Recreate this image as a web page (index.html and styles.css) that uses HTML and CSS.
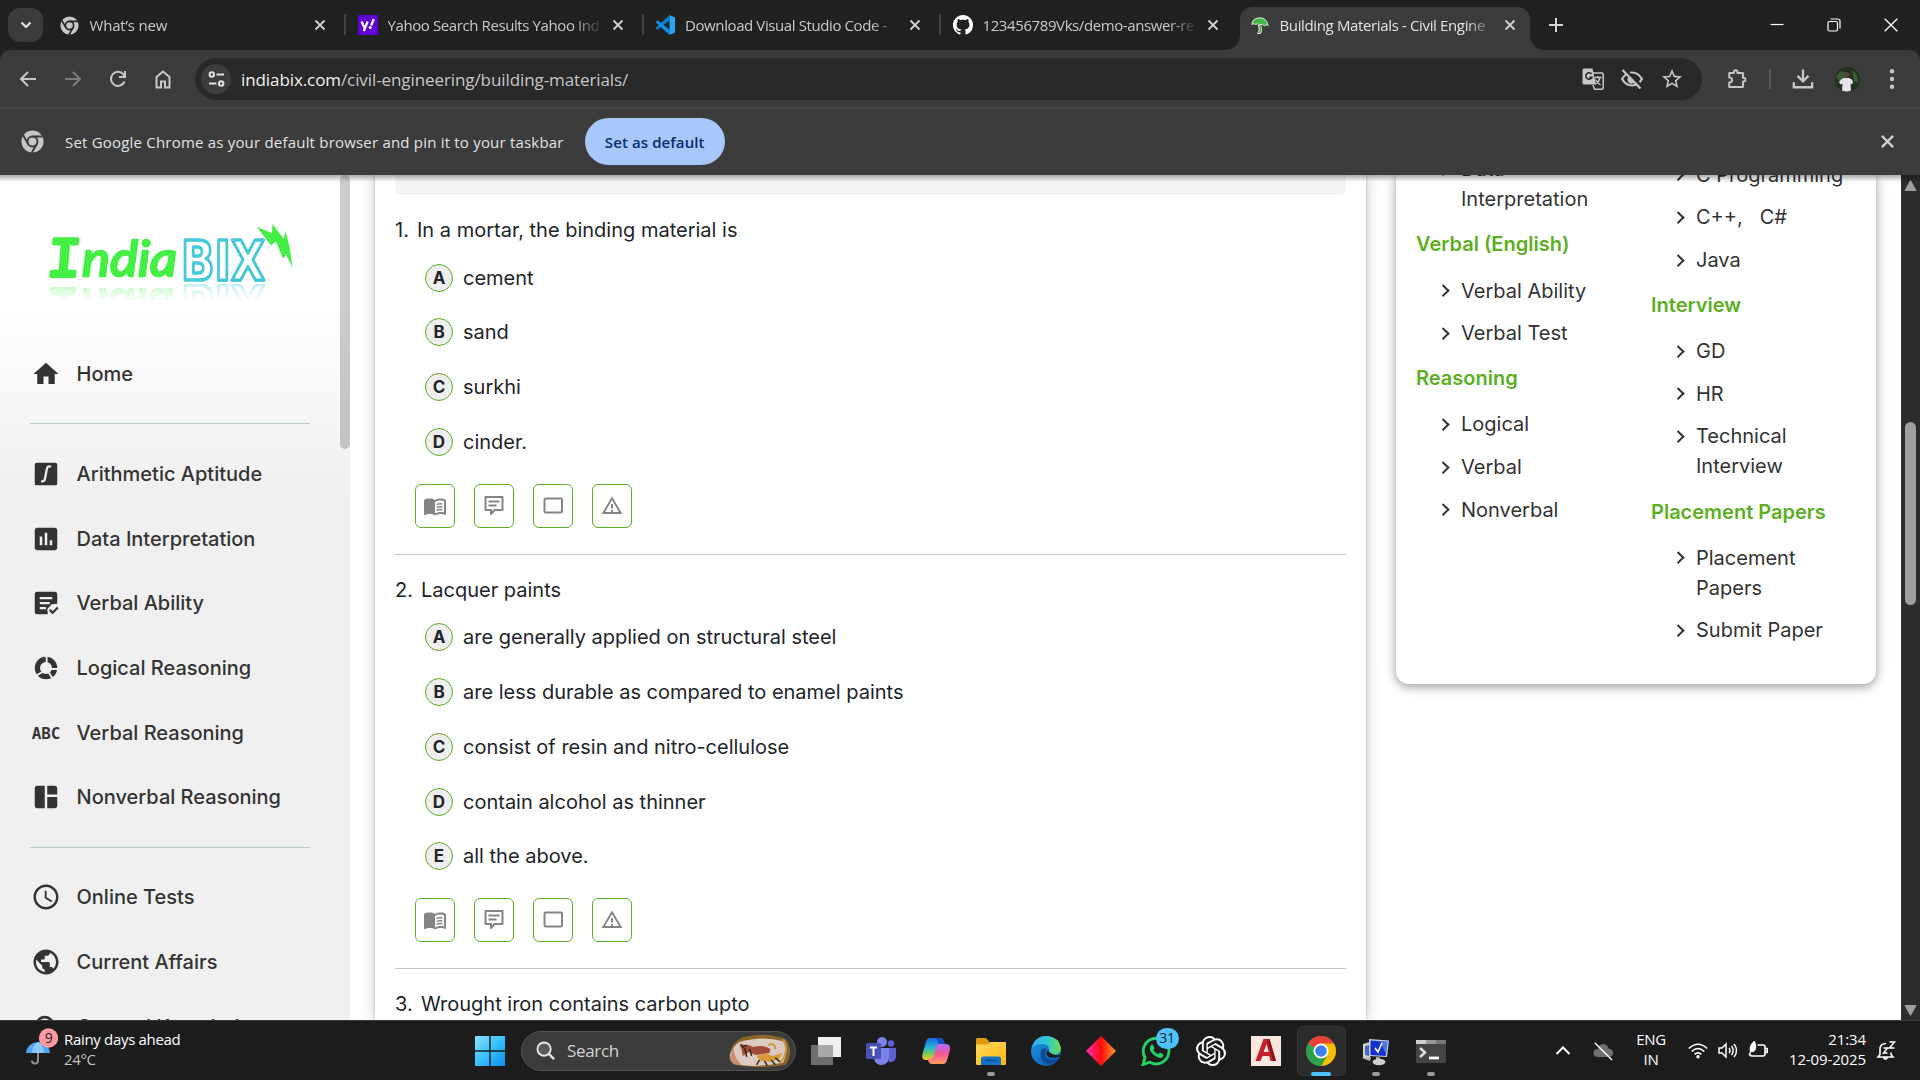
FILE: index.html
```
<!DOCTYPE html>
<html lang="en">
<head>
<meta charset="utf-8">
<title>Building Materials - Civil Engineering</title>
<link rel="stylesheet" href="styles.css">
</head>
<body>
<svg class="defs" width="0" height="0">
  <defs>
    <symbol id="x" viewBox="0 0 12 12"><path d="M1.500 1.500l9 9m0-9l-9 9" fill="none" stroke="currentColor" stroke-width="1.800"/></symbol>
    <symbol id="chrome-mono" viewBox="0 0 24 24"><circle cx="12" cy="12" r="11.500" fill="currentColor"/><circle cx="12" cy="12" r="5.200" fill="none" stroke="var(--bg)" stroke-width="2"/><path d="M12 6.800h10.600M7.500 14.600L2.200 5.400M16.500 14.600L11.200 23.800" stroke="var(--bg)" stroke-width="2"/></symbol>
    <symbol id="book" viewBox="0 0 24 24"><path d="M21 5c-1.100-.35-2.300-.5-3.500-.5-1.950 0-4.050.4-5.500 1.500-1.450-1.100-3.550-1.500-5.500-1.500S2.450 4.900 1 6v14.650c0 .25.25.5.5.5 1.500-.7 3.500-1.150 5-1.150 1.950 0 4.050.4 5.500 1.500 1.350-.85 3.800-1.500 5.500-1.500 1.650 0 3.350.3 4.750 1.050.45.15.75-.15.75-.45V6c-.6-.45-1.250-.75-2-1zm0 13.500c-3.200-.9-6.500-.4-9 1V8c2.700-1.700 6.300-1.900 9-1z" fill="currentColor"/><path d="M13.600 10.600c1.800-.8 3.900-.9 5.900-.5M13.600 13.400c1.800-.8 3.900-.9 5.900-.5M13.600 16.200c1.800-.8 3.900-.9 5.900-.5" fill="none" stroke="currentColor" stroke-width="1.500"/></symbol>
    <symbol id="note" viewBox="0 0 24 24"><path d="M3.500 3h17v13h-8l-3.500 4v-4H3.500z" fill="none" stroke="currentColor" stroke-width="2" stroke-linejoin="round"/><path d="M6.500 7.500h11M6.500 11.500h8" stroke="currentColor" stroke-width="1.900"/></symbol>
    <symbol id="box" viewBox="0 0 24 24"><rect x="3.500" y="4.500" width="17.500" height="14" rx="1.200" fill="none" stroke="currentColor" stroke-width="2"/></symbol>
    <symbol id="warn" viewBox="0 0 24 24"><path d="M12 4.300L3.300 19h17.400z" fill="none" stroke="currentColor" stroke-width="1.900"/><path d="M12 10v4.500M12 16v2" stroke="currentColor" stroke-width="2"/></symbol>
    <linearGradient id="win" x1="0" y1="0" x2="1" y2="1"><stop offset="0" stop-color="#8be0ff"/><stop offset=".5" stop-color="#37c2fb"/><stop offset="1" stop-color="#0a8cf0"/></linearGradient>
    <linearGradient id="fold" x1="0" y1="0" x2="1" y2="1"><stop offset="0" stop-color="#ffd95c"/><stop offset="1" stop-color="#fbb813"/></linearGradient>
    <linearGradient id="edgeA" x1="0" y1="0" x2="1" y2="0"><stop offset="0" stop-color="#36b6f0"/><stop offset=".5" stop-color="#2fc5d8"/><stop offset="1" stop-color="#6be04a"/></linearGradient>
    <linearGradient id="edgeB" x1="0" y1="0" x2="1" y2="1"><stop offset="0" stop-color="#1e9be8"/><stop offset="1" stop-color="#0b4fa8"/></linearGradient>
    <linearGradient id="dia"><stop offset="0" stop-color="#ff2ec0"/><stop offset=".5" stop-color="#ff0a0a"/><stop offset="1" stop-color="#ff9d2b"/></linearGradient>
    <linearGradient id="copA" x1="0" y1="0" x2="0" y2="1"><stop offset="0" stop-color="#1768e8"/><stop offset=".45" stop-color="#27b6d6"/><stop offset=".7" stop-color="#6ccf57"/><stop offset="1" stop-color="#ffc72e"/></linearGradient>
    <linearGradient id="copB" x1="0" y1="0" x2="0" y2="1"><stop offset="0" stop-color="#b26bff"/><stop offset=".5" stop-color="#f2599a"/><stop offset="1" stop-color="#ff9a5c"/></linearGradient>
    <linearGradient id="fade" x1="0" y1="0" x2="0" y2="1"><stop offset="0" stop-color="#fff" stop-opacity=".32"/><stop offset="1" stop-color="#fff" stop-opacity="0"/></linearGradient>
    <mask id="reflect" maskUnits="userSpaceOnUse" x="0" y="69" width="260" height="17"><rect x="0" y="69" width="260" height="17" fill="url(#fade)"/></mask>
  </defs>
</svg>

<div class="window">
  <div class="tabstrip">
    <div class="tab-search"><svg width="12" height="8" viewBox="0 0 12 8"><path d="M1.500 1.500L6 6l4.500-4.500" fill="none" stroke="#e3e3e3" stroke-width="2.200"/></svg></div>
    <div class="tab"><svg class="fav mono"><use href="#chrome-mono"/></svg><span class="tab-title">What’s new</span><svg class="close"><use href="#x"/></svg></div>
    <div class="tab"><svg class="fav" viewBox="0 0 20 20"><rect width="20" height="20" fill="#6001d2"/><path d="M3.500 6.500l3 6.300M9.700 6.500L5.700 16M15.800 4l-2.600 6.500" stroke="#fff" stroke-width="2.300"/><circle cx="12.200" cy="12.600" r="1.500" fill="#fff"/></svg><span class="tab-title">Yahoo Search Results Yahoo Ind</span><svg class="close"><use href="#x"/></svg></div>
    <div class="tab"><svg class="fav" viewBox="0 0 20 20"><path d="M14.500 0L20 2.500v15L14.500 20z" fill="#2aa5f3"/><path d="M14.500 0v5.500L2.500 14.800.5 13z" fill="#0a7dcb"/><path d="M14.500 20v-5.500L2.500 5.200.5 7z" fill="#0f8fe0"/></svg><span class="tab-title">Download Visual Studio Code -</span><svg class="close"><use href="#x"/></svg></div>
    <div class="tab"><svg class="fav" viewBox="0 0 16 16"><path fill="#fff" d="M8 0C3.580 0 0 3.580 0 8c0 3.540 2.290 6.530 5.470 7.590.4.070.55-.17.55-.38 0-.19-.01-.82-.01-1.490-2.010.37-2.530-.49-2.690-.94-.09-.23-.48-.94-.82-1.130-.28-.15-.68-.52-.01-.53.63-.01 1.080.58 1.230.82.72 1.210 1.870.87 2.330.66.07-.52.28-.87.51-1.070-1.780-.2-3.640-.89-3.640-3.950 0-.87.31-1.590.82-2.150-.08-.2-.36-1.020.08-2.120 0 0 .67-.21 2.200.82.64-.18 1.320-.27 2-.27s1.360.09 2 .27c1.530-1.040 2.200-.82 2.200-.82.44 1.100.16 1.920.08 2.120.51.56.82 1.270.82 2.150 0 3.070-1.870 3.750-3.650 3.950.29.25.54.73.54 1.480 0 1.070-.01 1.930-.01 2.200 0 .21.15.46.55.38A8.010 8.010 0 0 0 16 8c0-4.420-3.580-8-8-8z"/></svg><span class="tab-title">123456789Vks/demo-answer-re</span><svg class="close"><use href="#x"/></svg></div>
    <div class="tab active"><svg class="fav" viewBox="0 0 20 20"><path d="M9 9l1 6q0 3-3 2" fill="none" stroke="#e8e8e8" stroke-width="3.500"/><path d="M1 9Q1 3 8 2q8-1 10 8-2-2-4 .5-2-3-4.500-1Q7 7 5 9 3 7 1 9z" fill="#45b84a" stroke="#e3f5e0" stroke-width="1"/><path d="M9.500 9.500l.7 6q-.5 2-2.700 1.500" fill="none" stroke="#3ba843" stroke-width="1.500"/></svg><span class="tab-title">Building Materials - Civil Engine</span><svg class="close"><use href="#x"/></svg></div>
    <svg class="new-tab" viewBox="0 0 14 14"><path d="M7 0v14M0 7h14" stroke="#d6d6d6" stroke-width="2"/></svg>
    <div class="win-buttons">
      <svg viewBox="0 0 14 14"><path d="M.5 6.500h13" stroke="#fff" stroke-width="1.200"/></svg>
      <svg viewBox="0 0 14 14"><rect x="1" y="3.500" width="9.500" height="9.500" rx="1.500" fill="none" stroke="#fff" stroke-width="1.200"/><path d="M3.500 1h7.500q2 0 2 2v7.500" fill="none" stroke="#fff" stroke-width="1.200"/></svg>
      <svg viewBox="0 0 14 14"><path d="M.7.7l12.600 12.600M13.300.7L.7 13.300" stroke="#fff" stroke-width="1.300"/></svg>
    </div>
  </div>

  <div class="toolbar">
    <svg class="nav" viewBox="0 0 20 20"><path d="M18 10H3M10 3l-7 7 7 7" fill="none" stroke="#c7c7c7" stroke-width="2"/></svg>
    <svg class="nav" viewBox="0 0 20 20"><path d="M2 10h15M10 3l7 7-7 7" fill="none" stroke="#7d7d7d" stroke-width="2"/></svg>
    <svg class="nav" viewBox="0 0 20 20"><path d="M16.500 12.500A7 7 0 1 1 15.500 5.500L17 7.500" fill="none" stroke="#c7c7c7" stroke-width="2"/><path d="M17 2v6h-6" fill="none" stroke="#c7c7c7" stroke-width="2"/></svg>
    <svg class="nav" viewBox="0 0 20 20"><path d="M3.500 8L10 2.500 16.500 8v10.500h-4.500v-6H8v6H3.500z" fill="none" stroke="#c7c7c7" stroke-width="2"/></svg>
    <div class="omnibox">
      <div class="site-info"><svg width="17" height="16" viewBox="0 0 17 16"><g fill="none" stroke="#e3e3e3" stroke-width="2"><circle cx="3.800" cy="3.500" r="2.200"/><path d="M8.500 3.500H16M1 12.500h7.500"/><circle cx="13.200" cy="12.500" r="2.200"/></g></svg></div>
      <span class="url"><b>indiabix.com</b>/civil-engineering/building-materials/</span>
      <div class="omni-actions">
        <svg viewBox="0 0 22 22"><path d="M2 .5h8.500l3.500 16H2q-1.500 0-1.500-1.500V2Q.5.500 2 .5z" fill="#c7c7c7"/><path d="M11 5h9q1.200 0 1.200 1.200V20q0 1.200-1.200 1.200h-7.500L11 17" fill="none" stroke="#c7c7c7" stroke-width="1.500"/><path d="M12.500 9.500h7M15.800 8v1.500M18 9.500q-1 4.500-4.500 6.500M13.500 11.500q2 3.500 5 5.500" fill="none" stroke="#c7c7c7" stroke-width="1.400"/><path d="M9.700 6.200A3.200 3.200 0 1 0 10 9.200H7.300" fill="none" stroke="#282828" stroke-width="1.500"/></svg>
        <svg viewBox="0 0 24 24"><path d="M2 12q4-6.500 10-6.500T22 12q-4 6.500-10 6.500T2 12z" fill="none" stroke="#c7c7c7" stroke-width="2.200"/><path d="M9 9.500a4 4 0 1 0 6 5z" fill="#c7c7c7"/><path d="M4 1.500L22 19.500" stroke="#282828" stroke-width="2.500"/><path d="M2.500 3L20.500 21.500" stroke="#c7c7c7" stroke-width="2.200"/></svg>
        <svg viewBox="0 0 24 24"><path fill="#c7c7c7" d="M22 9.240l-7.190-.62L12 2 9.190 8.630 2 9.240l5.460 4.730L5.820 21 12 17.270 18.180 21l-1.630-7.030L22 9.240zM12 15.400l-3.760 2.270 1-4.280-3.320-2.880 4.380-.38L12 6.100l1.710 4.040 4.380.38-3.320 2.880 1 4.280L12 15.400z"/></svg>
      </div>
    </div>
    <div class="toolbar-right">
      <svg class="ext" viewBox="0 0 24 24"><path d="M3.500 5.500h5.200q-.8-3 1.800-3t1.800 3h6.200v5.200q2.700-.6 2.700 2t-2.700 2v6h-15v-5q3.200-.2 3.200-2.700T3.500 10.300z" fill="none" stroke="#c7c7c7" stroke-width="2.100" stroke-linejoin="round"/></svg>
      <i class="tb-sep"></i>
      <svg class="ext" viewBox="0 0 24 24"><path d="M12 1.500v12M6 8.500l6 6 6-6M2 15.500v5.500h20v-5.500" fill="none" stroke="#c7c7c7" stroke-width="2.600"/></svg>
      <svg class="avatar" viewBox="0 0 25 25"><circle cx="12.500" cy="12.500" r="12.500" fill="#24301f"/><path d="M1 10q5-9 9-4t-5 9zM17 3q7 4 6 13l-4-2z" fill="#3c5a32"/><circle cx="11.500" cy="8" r="2.700" fill="#5d4436"/><path d="M4 15q1.500-3 5-4h5q3.500 1 4 4l-1 2.500-1.500-1 .5 7q-4 2-9 0l.5-7-2 1z" fill="#e6e6ea"/></svg>
      <svg class="ext" viewBox="0 0 24 24"><g fill="#c7c7c7"><circle cx="12" cy="3.500" r="2.400"/><circle cx="12" cy="12" r="2.400"/><circle cx="12" cy="20.500" r="2.400"/></g></svg>
    </div>
  </div>

  <div class="infobar">
    <svg class="info-icon"><use href="#chrome-mono"/></svg>
    <span class="info-text">Set Google Chrome as your default browser and pin it to your taskbar</span>
    <button class="default-btn">Set as default</button>
    <svg class="close info-close"><use href="#x"/></svg>
  </div>

  <div class="viewport">
    <aside class="sidebar">
      <svg class="logo" width="260" height="90" viewBox="0 0 260 90">
        <g id="wordmark">
          <text class="logo-i" transform="skewX(-5)" x="11" y="61" textLength="34" lengthAdjust="spacingAndGlyphs">I</text>
          <text class="logo-india" x="42" y="61" textLength="95" lengthAdjust="spacingAndGlyphs">ndia</text>
          <text class="logo-bix" x="141" y="65" textLength="84" lengthAdjust="spacingAndGlyphs">BIX</text>
        </g>
        <path d="M217 12l15 6 .5-9 11 14.500 2-7 4 15 3 21-6.500-13-3 4-7-17-5 4z" fill="#45ef45"/>
        <g mask="url(#reflect)"><use href="#wordmark" transform="translate(0 135) scale(1 -1)"/></g>
      </svg>
      <nav class="side-nav">
        <a class="home"><svg viewBox="0 0 24 24"><path d="M10 20v-6h4v6h5v-8h3L12 3 2 12h3v8z"/></svg>Home</a>
        <hr>
        <a><svg viewBox="0 0 24 24"><rect x="3" y="3" width="18" height="18" rx="1.500"/><path d="M16 6.200q-2.700-1.200-3.300 1.800l-1.600 8q-.5 2.500-3 1.700" fill="none" stroke="#f0f0f0" stroke-width="1.800"/></svg>Arithmetic Aptitude</a>
        <a><svg viewBox="0 0 24 24"><path d="M19 3H5c-1.100 0-2 .9-2 2v14c0 1.100.9 2 2 2h14c1.100 0 2-.9 2-2V5c0-1.100-.9-2-2-2zM9 17H7v-7h2v7zm4 0h-2V7h2v10zm4 0h-2v-4h2v4z"/></svg>Data Interpretation</a>
        <a><svg viewBox="0 0 24 24"><path d="M5 3h14q2 0 2 2v7.500l-4.500.5-3.500 4 .5 4H5q-2 0-2-2V5q0-2 2-2z"/><path d="M7 8h10M7 12h8M7 16h5" stroke="#f0f0f0" stroke-width="1.800"/><path d="M15 17.500l2.300 2.300 4.200-4.200" fill="none" stroke="#333" stroke-width="1.800"/></svg>Verbal Ability</a>
        <a><svg viewBox="0 0 24 24"><circle cx="12" cy="12" r="6.900" fill="none" stroke="#333" stroke-width="4.200"/><path d="M12.500 8V1M16 12.800h7M14 15l3.500 6M9.500 15L3.500 18.500" stroke="#f0f0f0" stroke-width="1.500"/></svg>Logical Reasoning</a>
        <a><svg viewBox="0 0 24 24"><text class="abc" x="0.500" y="16.500" textLength="23" lengthAdjust="spacingAndGlyphs">ABC</text></svg>Verbal Reasoning</a>
        <a><svg viewBox="0 0 24 24"><path d="M11 21H5c-1.100 0-2-.9-2-2V5c0-1.100.9-2 2-2h6v18zm2 0h6c1.100 0 2-.9 2-2v-7h-8v9zm8-11V5c0-1.100-.9-2-2-2h-6v7h8z"/></svg>Nonverbal Reasoning</a>
        <hr class="second">
        <a><svg viewBox="0 0 24 24"><path d="M11.990 2C6.470 2 2 6.480 2 12s4.470 10 9.990 10C17.520 22 22 17.520 22 12S17.520 2 11.990 2zM12 20c-4.420 0-8-3.580-8-8s3.580-8 8-8 8 3.580 8 8-3.580 8-8 8zm.5-13H11v6l5.250 3.150.75-1.230-4.500-2.670z"/></svg>Online Tests</a>
        <a><svg viewBox="0 0 24 24"><path d="M12 2C6.480 2 2 6.480 2 12s4.480 10 10 10 10-4.480 10-10S17.520 2 12 2zm-1 17.930c-3.950-.49-7-3.850-7-7.930 0-.62.08-1.210.21-1.790L9 15v1c0 1.100.9 2 2 2v1.930zm6.900-2.540c-.26-.81-1-1.390-1.900-1.390h-1v-3c0-.55-.45-1-1-1H8v-2h2c.55 0 1-.45 1-1V7h2c1.100 0 2-.9 2-2v-.41c2.930 1.190 5 4.060 5 7.410 0 2.080-.8 3.970-2.100 5.390z"/></svg>Current Affairs</a>
        <a><svg viewBox="0 0 24 24"><circle cx="11" cy="10.500" r="6.500" fill="none" stroke="#333" stroke-width="2.200"/></svg>General Knowledge</a>
      </nav>
      <i class="side-thumb"></i>
    </aside>

    <main class="quiz">
      <div class="prev-box"></div>
      <section class="question">
        <h3><span>1.</span>In a mortar, the binding material is</h3>
        <div class="opt"><b>A</b>cement</div>
        <div class="opt"><b>B</b>sand</div>
        <div class="opt"><b>C</b>surkhi</div>
        <div class="opt"><b>D</b>cinder.</div>
        <div class="actions"><a><svg><use href="#book"/></svg></a><a><svg><use href="#note"/></svg></a><a><svg><use href="#box"/></svg></a><a><svg><use href="#warn"/></svg></a></div>
      </section>
      <section class="question">
        <h3><span>2.</span>Lacquer paints</h3>
        <div class="opt"><b>A</b>are generally applied on structural steel</div>
        <div class="opt"><b>B</b>are less durable as compared to enamel paints</div>
        <div class="opt"><b>C</b>consist of resin and nitro-cellulose</div>
        <div class="opt"><b>D</b>contain alcohol as thinner</div>
        <div class="opt"><b>E</b>all the above.</div>
        <div class="actions"><a><svg><use href="#book"/></svg></a><a><svg><use href="#note"/></svg></a><a><svg><use href="#box"/></svg></a><a><svg><use href="#warn"/></svg></a></div>
      </section>
      <section class="question">
        <h3><span>3.</span>Wrought iron contains carbon upto</h3>
      </section>
    </main>

    <aside class="links">
      <div class="col col-left">
        <ul><li>Data<br>Interpretation</li></ul>
        <h4>Verbal (English)</h4>
        <ul><li>Verbal Ability</li><li>Verbal Test</li></ul>
        <h4>Reasoning</h4>
        <ul><li>Logical</li><li>Verbal</li><li>Nonverbal</li></ul>
      </div>
      <div class="col col-right">
        <ul><li>C Programming</li><li>C++, &nbsp; C#</li><li>Java</li></ul>
        <h4>Interview</h4>
        <ul><li>GD</li><li>HR</li><li>Technical<br>Interview</li></ul>
        <h4>Placement Papers</h4>
        <ul><li>Placement<br>Papers</li><li>Submit Paper</li></ul>
      </div>
    </aside>

    <div class="scrollbar">
      <svg width="13" height="11" viewBox="0 0 13 11"><path d="M6.500.5l5.500 10H1z" fill="#9f9f9f" stroke="#9f9f9f"/></svg>
      <i></i>
      <svg width="13" height="11" viewBox="0 0 13 11"><path d="M6.500 10.500L1 .5h11z" fill="#9f9f9f" stroke="#9f9f9f"/></svg>
    </div>
  </div>

  <footer class="taskbar">
    <div class="weather">
      <svg width="32" height="38" viewBox="0 0 32 38"><path d="M12 14v18q0 3.500-3 3.500t-3-3" fill="none" stroke="#8d8d8d" stroke-width="2"/><path d="M0 25Q1 15 12 14q11 1 12 11z" fill="#4fa6ee"/><path d="M6 25q0-8 6-11 6 3 6 11z" fill="#8cc8f8"/><circle cx="22.500" cy="10" r="9.700" fill="#ff9aa2"/><text x="22.500" y="15" text-anchor="middle" font-size="14" fill="#1c1c1c">9</text></svg>
      <p>Rainy days ahead<br><span>24°C</span></p>
    </div>
    <div class="task"><svg viewBox="0 0 30 30"><path d="M0 0h14.300v14.300H0zM15.700 0H30v14.300H15.700zM0 15.700h14.300V30H0zM15.700 15.700H30V30H15.700z" fill="url(#win)"/></svg></div>
    <div class="search">
      <svg class="lens" viewBox="0 0 20 20"><circle cx="8.500" cy="8.500" r="7" fill="#5a5a5a" stroke="#e6e6e6" stroke-width="2"/><path d="M13.500 13.500L19 19" stroke="#e6e6e6" stroke-width="2.500"/></svg>
      <span>Search</span>
      <svg class="art" viewBox="0 0 64 34"><path d="M14 3Q38-3 58 5q8 12 0 26-30 5-52 0-8-4-5-12Q3 8 14 3z" fill="#8a6428"/><path d="M10 8Q34 1 55 7q6 10 0 22-26 5-46 2-9-5-8-10 4-10 9-13z" fill="#dccbc0"/><path d="M1 23q4-8 4-16-2 16 8 24-12 1-12-8z" fill="#c98c70"/><path d="M11 11q8-1 14 2 10-3 17 2l-1 4-14 2-7-3-6 4-1-6z" fill="#a04a38"/><path d="M28 22q10-4 16 0l10-3-3 6-9 3-10-1z" fill="#d79a35"/><path d="M12 10l2 3 4-2M16 14l2 9M21 15l2 7M31 26l-3 5M36 27l3 5M43 26l4 5M47 24l5 4" fill="none" stroke="#35241d" stroke-width="1.500"/><path d="M40 11q7-3 7 4M55 5q7 12-3 24" fill="none" stroke="#c59a4c" stroke-width="2"/></svg>
    </div>
    <div class="apps">
      <div class="task"><svg viewBox="0 0 30 30"><path d="M0 9h22v20H0z" fill="#6e6e6e"/><path d="M7 1h23v20H7z" fill="#f0f0f0"/><path d="M7 9h15v12H7z" fill="#a8a8a8"/></svg></div>
      <div class="task"><svg viewBox="0 0 30 30"><circle cx="25" cy="7.500" r="3.200" fill="#5b63d3"/><circle cx="16" cy="6" r="5" fill="#7b83eb"/><path d="M19 12h11v9q-1 6-7 5z" fill="#5b63d3"/><path d="M8 12h15v10q-1 7-8 7-6 0-7-7z" fill="#7b83eb"/><rect x="0" y="7" width="15" height="16" rx="1.500" fill="#4650b5"/><path d="M4 11.500h7M7.500 11.500V20" stroke="#fff" stroke-width="2"/></svg></div>
      <div class="task"><svg viewBox="0 0 30 30"><path d="M8 2h11q3 0 4 4l1 3h-4q-3 0-4 4l-2 7q-1 4-4 4H5q-5 0-3.500-6L5 6q1-4 3-4z" fill="url(#copA)"/><path d="M18 2q4 0 5 4l1 3h-4q-2 0-3-2-1-4-4-5z" fill="#184fc7"/><path d="M22 28H11q-3 0-4-4l0-1q5 0 6-4l2-8q1-3 4-3h6q5 0 4 6l-3 10q-1 4-4 4z" fill="url(#copB)"/></svg></div>
      <div class="task open"><svg viewBox="0 0 30 30"><path d="M0 3.500Q0 2 1.500 2H10l3.500 4H30v8H0z" fill="#e09a12"/><path d="M0 8.500h12L15 6h13.500Q30 6 30 7.500v20q0 1.500-1.500 1.500h-27Q0 29 0 27.500z" fill="url(#fold)"/><path d="M5 29v-6q0-2.500 2.500-2.500h15Q25 20.500 25 23v6z" fill="#1272c4"/><path d="M9 24.500h12" stroke="#0b4d8f" stroke-width="1.500"/></svg></div>
      <div class="task"><svg viewBox="0 0 30 30"><circle cx="15" cy="15" r="15" fill="url(#edgeB)"/><path d="M1 12Q4 0 16 0q12 1 14 12 0 7-8 7-5 0-4-4 1-7-7-7Q4 8 1 12z" fill="url(#edgeA)"/><path d="M10 15q-2 12 8 13 6 0 10-5-9 3-13-2-2-4 1-8-5-2-6 2z" fill="#0d4a96"/><path d="M17 14q-4 4 1 7 5 2 12-1v-1q-10 1-13-5z" fill="#1c1c1c"/></svg></div>
      <div class="task"><svg viewBox="0 0 30 30"><path d="M15 0l15 15-15 15L0 15z" fill="url(#dia)"/></svg></div>
      <div class="task"><svg viewBox="0 0 30 30"><path d="M2 28.500l2-7a12.800 12.800 0 1 1 4.700 4.700z" fill="none" stroke="#25d366" stroke-width="2.800"/><path d="M10 9q1-1 2 0l1.500 3q0 1-1.200 2 1.700 3 5 4.200l1.700-1.600 3.500 1.600q.5 2-1.500 3.300-3 1.500-8-2.500T9 12q0-2 1-3z" fill="#25d366"/></svg><em>31</em></div>
      <div class="task"><svg viewBox="0 0 24 24"><path fill="#fff" d="M22.2819 9.8211a5.9847 5.9847 0 0 0-.5157-4.9108 6.0462 6.0462 0 0 0-6.5098-2.9A6.0651 6.0651 0 0 0 4.9807 4.1818a5.9847 5.9847 0 0 0-3.9977 2.9 6.0462 6.0462 0 0 0 .7427 7.0966 5.98 5.98 0 0 0 .511 4.9107 6.051 6.051 0 0 0 6.5146 2.9001A5.9847 5.9847 0 0 0 13.2599 24a6.0557 6.0557 0 0 0 5.7718-4.2058 5.9894 5.9894 0 0 0 3.9977-2.9001 6.0557 6.0557 0 0 0-.7475-7.0729zm-9.022 12.6081a4.4755 4.4755 0 0 1-2.8764-1.0408l.1419-.0804 4.7783-2.7582a.7948.7948 0 0 0 .3927-.6813v-6.7369l2.02 1.1686a.071.071 0 0 1 .038.052v5.5826a4.504 4.504 0 0 1-4.4945 4.4944zm-9.6607-4.1254a4.4708 4.4708 0 0 1-.5346-3.0137l.142.0852 4.783 2.7582a.7712.7712 0 0 0 .7806 0l5.8428-3.3685v2.3324a.0804.0804 0 0 1-.0332.0615L9.74 19.9502a4.4992 4.4992 0 0 1-6.1408-1.6464zM2.3408 7.8956a4.485 4.485 0 0 1 2.3655-1.9728V11.6a.7664.7664 0 0 0 .3879.6765l5.8144 3.3543-2.0201 1.1685a.0757.0757 0 0 1-.071 0l-4.8303-2.7865A4.504 4.504 0 0 1 2.3408 7.872zm16.5963 3.8558L13.1038 8.364 15.1192 7.2a.0757.0757 0 0 1 .071 0l4.8303 2.7913a4.4944 4.4944 0 0 1-.6765 8.1042v-5.6772a.79.79 0 0 0-.407-.667zm2.0107-3.0231l-.142-.0852-4.7735-2.7818a.7759.7759 0 0 0-.7854 0L9.409 9.2297V6.8974a.0662.0662 0 0 1 .0284-.0615l4.8303-2.7866a4.4992 4.4992 0 0 1 6.6802 4.66zM8.3065 12.863l-2.02-1.1638a.0804.0804 0 0 1-.038-.0567V6.0742a4.4992 4.4992 0 0 1 7.3757-3.4537l-.142.0805L8.704 5.459a.7948.7948 0 0 0-.3927.6813zm1.0976-2.3654l2.602-1.4998 2.6069 1.4998v2.9994l-2.5974 1.4997-2.6067-1.4997Z"/></svg></div>
      <div class="task"><svg viewBox="0 0 30 30"><rect width="30" height="30" fill="#f9e6df"/><path d="M12.500 3h6L25 25h-5.500l-1.200-5h-6.800l-2 5H4.500zm3 5l-2.800 8h5z" fill="#c4232b"/><path d="M18.500 3L25 25h-3L16 3z" fill="#8d1119"/></svg></div>
      <div class="task current"><svg viewBox="0 0 30 30"><circle cx="15" cy="15" r="15" fill="#34a853"/><path d="M15 15L2 7.500Q6 0 15 0t13 7.500z" fill="#ea4335"/><path d="M15 7.500h13Q32 15 28 22.500 23.500 30 15 30l6.500-11.200z" fill="#fbbc05"/><path d="M2 7.500Q-2 15 2 22.500 6.500 30 15 30l6-10.500-12-1z" fill="#2da04c"/><circle cx="15" cy="15" r="7.500" fill="#fff"/><circle cx="15" cy="15" r="5.800" fill="#3b7ff0"/></svg></div>
      <div class="task open"><svg viewBox="0 0 30 30"><path d="M2 8l7-2v17l-7-1z" fill="#d0d0d0"/><path d="M4 10l4-1v11l-4-1z" fill="#4466c8"/><path d="M8 3l20 1.500-2 16.500-18-1z" fill="#c9cfe0"/><path d="M9.500 4.500l17 1.300L24.700 20 9.500 19z" fill="#1330d0"/><path d="M19 5.200l7.500.6L25 18z" fill="#4b74ee"/><path d="M14 12l3 4 4-9" fill="none" stroke="#fff" stroke-width="1.600"/><path d="M15 21l4 .5v3h-4z" fill="#b5b5b5"/><ellipse cx="18" cy="26" rx="6.500" ry="3.200" fill="#cfcfcf"/><path d="M1 22l9-1-1 4z" fill="#b8b8b8"/></svg></div>
      <div class="task open"><svg viewBox="0 0 30 30"><rect x="0" y="4" width="30" height="23" rx="1.500" fill="#444"/><path d="M0 4h10v4H0z" fill="#cfcfcf"/><path d="M10 4h10v4H10z" fill="#9a9a9a"/><path d="M20 4h10v4H20z" fill="#777"/><path d="M4 12l5 4.500L4 21" fill="none" stroke="#dcdcdc" stroke-width="2.500"/><path d="M13 22h10" stroke="#fff" stroke-width="2.800"/></svg></div>
    </div>
    <div class="tray">
      <div class="tcell wide"><svg viewBox="0 0 20 20"><path d="M3.500 13L10 6.500l6.500 6.500" fill="none" stroke="#fff" stroke-width="2"/></svg></div>
      <div class="tcell wide"><svg viewBox="0 0 20 20"><path d="M5 16q-4.500 0-4.500-4T5 8q1-5 5.500-5 4 0 5 4.500 4.500.5 4.500 4.500t-4 4z" fill="#6e6e6e"/><path d="M2 2l17 17" stroke="#fff" stroke-width="1.500"/></svg></div>
      <p class="lang">ENG<br>IN</p>
      <div class="tcell"><svg viewBox="0 0 20 20"><g fill="none" stroke="#fff" stroke-width="1.600"><path d="M.8 7.500q9.200-8.500 18.400 0M3.700 10.500q6.300-6 12.600 0M6.600 13.300q3.400-3 6.800 0"/></g><circle cx="10" cy="15.700" r="1.700" fill="#fff"/></svg></div>
      <div class="tcell"><svg viewBox="0 0 20 20"><g fill="none" stroke="#fff" stroke-width="1.500"><path d="M1 7h3l4-4v13l-4-4H1zM11 7q2 2.500 0 5M13.500 5q3.300 4.500 0 9M16 3q5 6.500 0 13"/></g></svg></div>
      <div class="tcell"><svg viewBox="0 0 20 20"><path d="M9.500 4H15q2 0 2 2v7q0 2-2 2H4q-2 0-2.500-2M17.500 7.500h1.700v4h-1.700" fill="none" stroke="#fff" stroke-width="1.600"/><path d="M1.500 8.500q0-5 5-9 4 8-1 11.500-4 .5-4-2.500z" fill="#fff"/><path d="M1 14l3-6" stroke="#fff" stroke-width="1.300"/></svg></div>
      <p class="clock">21:34<br>12-09-2025</p>
      <div class="tcell bell"><svg viewBox="0 0 20 20"><path d="M10 2.500Q4 2.500 4 8.500v5L2 16h15l-2-2.500v-2M7.500 16.500q2 3 4 0" fill="none" stroke="#fff" stroke-width="1.600"/><path d="M7.500 7h4l-4 5h4M13.500 1h5l-5 6h5" fill="none" stroke="#fff" stroke-width="1.500"/></svg></div>
    </div>
  </footer>
</div>
</body>
</html>
```
FILE: styles.css
```
* { box-sizing: border-box; }
body { margin: 0; overflow: hidden; }
.defs { position: absolute; }
svg { display: block; flex: none; }
p, h3, h4, ul { margin: 0; padding: 0; }

.window {
  width: 1920px;
  height: 1080px;
  display: flex;
  flex-direction: column;
  font-family: "Open Sans", sans-serif;
  overflow: hidden;
  background: #1f2120;
}

/* tab strip */
.tabstrip { height: 50px; flex: none; display: flex; align-items: center; padding-left: 8px; background: #1f2120; }
.tab-search {
  width: 35px; height: 34px; margin-right: 4.500px;
  display: flex; align-items: center; justify-content: center;
  border-radius: 12px; background: #3b3b3b;
}
.tab { position: relative; width: 297.500px; height: 50px; display: flex; align-items: center; padding: 0 19px 0 12.500px; color: #c9c9c9; }
.tab:not(.active)::after { content: ""; position: absolute; right: -1px; top: 14px; width: 2px; height: 21px; background: #434343; }
.tab:nth-child(5)::after { display: none; }
.fav { width: 20px; height: 20px; margin-right: 10px; }
.mono { --bg: #1f2120; color: #c7c7c7; width: 19px; height: 19px; margin-right: 10.500px; }
.tab-title {
  flex: 1; overflow: hidden; white-space: nowrap; font-size: 15px; letter-spacing: -0.4px;
  margin-right: 13px;
  -webkit-mask-image: linear-gradient(90deg, #000 88%, transparent 102%);
  mask-image: linear-gradient(90deg, #000 88%, transparent 102%);
}
.mono + .tab-title { letter-spacing: -0.2px; }
.close { width: 12px; height: 12px; color: #d2d2d2; }
.active { width: 290px; margin: 7px 0 0 2px; height: 43px; padding: 0 14px 7px 11px; border-radius: 12px 12px 0 0; background: #3b3b3b; color: #e3e3e3; }
.active .tab-title { letter-spacing: -0.36px; }
.active .fav { width: 19px; height: 19px; margin-right: 10px; }
.active::before, .active::after { content: ""; position: absolute; bottom: 0; width: 14px; height: 14px; }
.active::before { left: -14px; background: radial-gradient(circle at 0 0, transparent 13.500px, #3b3b3b 14px); }
.active::after { right: -14px; background: radial-gradient(circle at 100% 0, transparent 13.500px, #3b3b3b 14px); }
.new-tab { width: 14px; height: 14px; margin-left: 19px; }
.win-buttons { margin-left: auto; display: flex; gap: 43px; padding-right: 22px; }
.win-buttons svg { width: 14px; height: 14px; }

/* toolbar */
.toolbar { height: 59px; flex: none; display: flex; align-items: center; padding: 1px 17px 0 17.500px; gap: 25px; background: #3b3b3b; border-bottom: 2px solid #474747; border-radius: 10px 10px 0 0; }
.nav { width: 20px; height: 20px; margin-top: -1px; }
.omnibox { width: 1507px; height: 42px; margin-left: -2.500px; padding: 0 18px 0 6px; display: flex; align-items: center; border-radius: 21px; background: #282828; }
.site-info { width: 30px; height: 30px; display: flex; align-items: center; justify-content: center; border-radius: 50%; background: #3c3c3c; }
.url { margin-left: 10px; font-size: 17px; letter-spacing: -0.09px; color: #c7c7c7; }
.url b { font-weight: 400; color: #f2f2f2; }
.omni-actions { margin-left: auto; display: flex; gap: 16px; }
.omni-actions svg { width: 24px; height: 24px; }
.omni-actions svg:first-child { width: 22px; height: 22px; margin-top: 1px; }
.toolbar-right { flex: 1; display: flex; align-items: center; justify-content: space-between; margin-left: -1px; }
.ext { width: 22px; height: 22px; }
.avatar { width: 25px; height: 25px; }
.tb-sep { width: 2px; height: 20px; background: #5b5b5b; }

/* infobar */
.infobar { height: 66px; flex: none; display: flex; align-items: center; padding: 0 25px 1px 21px; background: #3b3b3b; }
.info-icon { --bg: #3b3b3b; color: #c7c7c7; width: 23px; height: 23px; margin-right: 21px; }
.info-text { font-size: 15px; letter-spacing: 0.2px; color: #e3e3e3; white-space: nowrap; }
.default-btn { width: 140px; height: 47px; margin-left: 21px; border: 0; border-radius: 24px; background: #a8c7fa; color: #062e6f; font: 600 15px "Open Sans", sans-serif; letter-spacing: 0.1px; }
.info-close { width: 15px; height: 15px; margin-left: auto; }

/* page */
.viewport { position: relative; height: 845px; flex: none; display: flex; overflow: hidden; background: #fff; font-family: Inter, sans-serif; font-size: 20px; color: #212529; }
.viewport::before { content: ""; position: absolute; z-index: 3; inset: 0 0 auto 0; height: 7px; background: linear-gradient(rgba(0,0,0,.32), rgba(0,0,0,0)); }

.sidebar { position: relative; width: 350px; flex: none; overflow: hidden; background: linear-gradient(#fff 130px, #f0f0f0 320px); }
.logo { margin: 40px 0 0 40px; overflow: visible; }
.logo-i { font: 400 56px "Liberation Mono", monospace; fill: #45ef45; stroke: #45ef45; stroke-width: 4px; stroke-linejoin: round; }
.logo-india { font: italic 400 49px "Lato", sans-serif; fill: #45ef45; stroke: #45ef45; stroke-width: 2.500px; stroke-linejoin: round; }
.logo-bix { font: 700 56px "DejaVu Sans", sans-serif; fill: #fff; stroke: #47c9dc; stroke-width: 3.500px; stroke-linejoin: round; }
.abc { font: 700 12px "DejaVu Sans Mono", monospace; }
.side-nav { display: flex; flex-direction: column; padding: 0 40px 0 31px; color: #333; }
.side-nav a { height: 64.700px; flex: none; display: flex; align-items: center; gap: 15.500px; font-weight: 500; white-space: nowrap; }
.side-nav a svg { width: 30px; height: 30px; fill: #333; }
.side-nav .home { margin-top: 37px; }
.side-nav hr { width: 280px; height: 1px; margin: 16.500px 0 17.300px -1px; border: 0; background: #b9cbc7; flex: none; }
.side-nav hr.second { margin: 17.500px 0 16.700px -1px; }
.side-thumb { position: absolute; right: 0; top: 0; width: 10px; height: 274px; border-radius: 5px; background: rgba(0,0,0,.2); }

.quiz { width: 991px; margin-left: 25px; padding: 0 20px; flex: none; background: #fff; box-shadow: 0 0 14px rgba(0,0,0,.22), 0 0 3px rgba(0,0,0,.2); }
.prev-box { height: 20px; border-radius: 0 0 6px 6px; background: #f4f4f4; }
.question { border-bottom: 1px solid #c4c5c5; padding-bottom: 26px; }
.question:last-child { border: 0; }
.question h3 { display: flex; height: 48px; margin-top: 11px; align-items: center; font-size: 20px; font-weight: 400; }
.question h3 span { width: 26px; flex: none; }
.question:nth-child(2) h3 span { width: 22px; }
.opt { height: 54.800px; display: flex; align-items: center; padding-left: 30px; gap: 10px; }
h3 + .opt { margin-top: -3.900px; }
.opt b { width: 28px; height: 28px; flex: none; display: flex; align-items: center; justify-content: center; border: 1.500px solid #5cae22; border-radius: 50%; background: #efefef; font-size: 17px; font-weight: 700; }
.actions { display: flex; gap: 19.500px; padding: 14.500px 0 0 20px; }
.actions a { width: 39.500px; height: 44px; display: flex; align-items: center; justify-content: center; border: 1px solid #5cae22; border-radius: 6px; color: #858585; }
.actions svg { width: 24px; height: 24px; }

.links { width: 480px; height: 509px; margin-left: 30px; flex: none; display: flex; overflow: hidden; border-radius: 0 0 13px 13px; background: #fff; box-shadow: 0 3px 9px rgba(0,0,0,.32), 0 2px 18px rgba(0,0,0,.1); color: #333; }
.col { width: 235px; flex: none; padding-left: 20px; }
.col ul { list-style: none; }
.col li { position: relative; padding: 6.300px 0 6.300px 45px; line-height: 30px; white-space: nowrap; }
.col li::before { content: ""; position: absolute; left: 22.500px; top: 17px; width: 6.500px; height: 6.500px; border: solid #333; border-width: 2px 2px 0 0; transform: rotate(45deg); }
.col h4 { height: 48.800px; line-height: 49.500px; font-size: 20px; font-weight: 600; color: #5cb01f; white-space: nowrap; }
.col-left { margin-top: -27.200px; }
.col-right { margin-top: -21.700px; }

.scrollbar { width: 19px; margin-left: auto; padding: 5px 0 4px; display: flex; flex-direction: column; align-items: center; background: #2c2c2c; }
.scrollbar i { width: 11px; height: 183px; margin: 231px 0 auto; border-radius: 6px; background: #9f9f9f; }

/* taskbar */
.taskbar { height: 60px; flex: none; display: flex; align-items: center; background: #1c1c1c; border-top: 1px solid #3a3a3a; color: #fff; font-size: 15px; line-height: 20px; letter-spacing: -0.32px; }
.weather { width: 462px; display: flex; align-items: center; padding-left: 26px; gap: 6px; }
.weather svg { margin-top: -8px; }
.taskbar p { margin-top: -3px; }
.weather span { color: #c4c4c4; }
.task { position: relative; width: 55px; height: 50px; flex: none; display: flex; align-items: center; justify-content: center; }
.task svg { width: 30px; height: 30px; }
.search { width: 275px; height: 40px; margin: 0 2.500px 0 4px; display: flex; align-items: center; padding: 0 3px 0 14px; border: 1px solid #525252; border-radius: 20px; background: #3b3b3b; font-size: 17px; color: #d2d2d2; }
.lens { width: 19px; height: 19px; margin-right: 12px; }
.art { width: 63px; height: 34px; margin-left: auto; }
.apps { display: flex; }
.open::after, .current::after { content: ""; position: absolute; bottom: 0; left: 50%; width: 8px; height: 4px; transform: translateX(-50%); border-radius: 2px; background: #9a9a9a; }
.current::before { content: ""; position: absolute; inset: 0 3px; border: 1px solid #363636; border-radius: 6px; background: #2b2b2b; }
.current svg { position: relative; }
.current::after { width: 20px; background: #4cc2ff; }
.task em { position: absolute; left: 27px; top: 2px; width: 23px; height: 21px; border-radius: 11px; background: #4cc2ff; color: #1c1c1c; font-style: normal; font-size: 14px; text-align: center; }
.tray { margin-left: auto; display: flex; align-items: center; padding-right: 19px; }
.tcell { width: 30px; display: flex; justify-content: center; }
.tcell svg { width: 20px; height: 20px; }
.wide { width: 40px; }
.lang { width: 56px; margin-right: 4px; text-align: center; }
.clock { width: 93px; text-align: right; letter-spacing: -0.12px; }
.bell { margin-left: 5px; }
```
